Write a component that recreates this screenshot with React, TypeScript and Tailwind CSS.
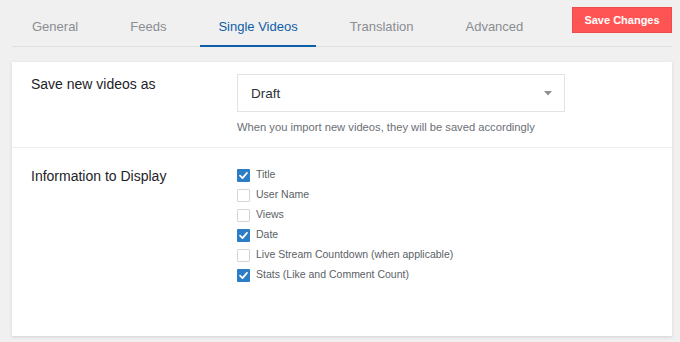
import React from "react";

const tabs = ["General", "Feeds", "Single Videos", "Translation", "Advanced"];

const options: { label: string; checked: boolean }[] = [
  { label: "Title", checked: true },
  { label: "User Name", checked: false },
  { label: "Views", checked: false },
  { label: "Date", checked: true },
  { label: "Live Stream Countdown (when applicable)", checked: false },
  { label: "Stats (Like and Comment Count)", checked: true },
];

function Box({ checked }: { checked: boolean }) {
  if (checked) {
    return (
      <span className="flex h-[13px] w-[13px] items-center justify-center rounded-[1px] bg-[#2c7dc6]">
        <svg width="11" height="11" viewBox="0 0 12 12" fill="none">
          <path d="M2.2 6.2 L4.9 8.8 L9.8 3.2" stroke="#ffffff" strokeWidth="1.9" strokeLinecap="round" strokeLinejoin="round" />
        </svg>
      </span>
    );
  }
  return <span className="h-[13px] w-[13px] rounded-[1px] border border-[#d4d5d8] bg-white" />;
}

export default function App() {
  return (
    <div className="relative h-[342px] w-[680px] overflow-hidden bg-[#f0f0f0] font-['Liberation_Sans',Arial,sans-serif]">
      <div className="ml-[12px] mr-[8px] flex h-[47px] border-b border-[#dedfe0]">
        <div className="ml-[2px] flex gap-[16px]">
          {tabs.map((t) => {
            const active = t === "Single Videos";
            return (
              <div
                key={t}
                className={
                  active
                    ? "-mb-px h-[47px] border-b-2 border-[#0f5ea8] px-[18px] pt-[19px] text-[13px] leading-[15px] text-[#0f5ea8]"
                    : "h-[46px] px-[18px] pt-[19px] text-[13px] leading-[15px] text-[#8a8d92]"
                }
              >
                {t}
              </div>
            );
          })}
        </div>
        <button className="ml-auto mt-[7px] h-[26px] w-[100px] border border-[#f04a4a] bg-[#ff5454] text-[11px] font-bold text-white">
          Save Changes
        </button>
      </div>

      <div className="mx-[12px] mt-[15px] h-[274px] w-[660px] bg-white shadow-[0_1px_3px_rgba(0,0,0,0.12)]">
        <div className="flex border-b border-[#eeeeee] pb-[13px] pl-[19px] pt-[12px]">
          <div className="w-[206px] text-[14px] leading-[20px] text-[#1d2327]">Save new videos as</div>
          <div>
            <div className="flex h-[38px] w-[328px] items-center justify-between border border-[#e2e3e5] pl-[13px] pr-[12px] text-[13.5px] text-[#2c3338]">
              <span className="mt-[2px]">Draft</span>
              <svg width="8" height="5" viewBox="0 0 8 5">
                <path d="M0 0 H8 L4 4.5 Z" fill="#8c8f94" />
              </svg>
            </div>
            <div className="mt-[9px] text-[11.2px] leading-[13px] text-[#6b6f75]">
              When you import new videos, they will be saved accordingly
            </div>
          </div>
        </div>
        <div className="flex pl-[19px] pt-[17px]">
          <div className="mt-[1px] w-[206px] text-[14px] leading-[20px] text-[#1d2327]">Information to Display</div>
          <div className="flex flex-col">
            {options.map((o) => (
              <div key={o.label} className="flex h-[20px] items-center gap-[6px]">
                <Box checked={o.checked} />
                <span className="text-[10.5px] text-[#5a5f66]">{o.label}</span>
              </div>
            ))}
          </div>
        </div>
      </div>
    </div>
  );
}
